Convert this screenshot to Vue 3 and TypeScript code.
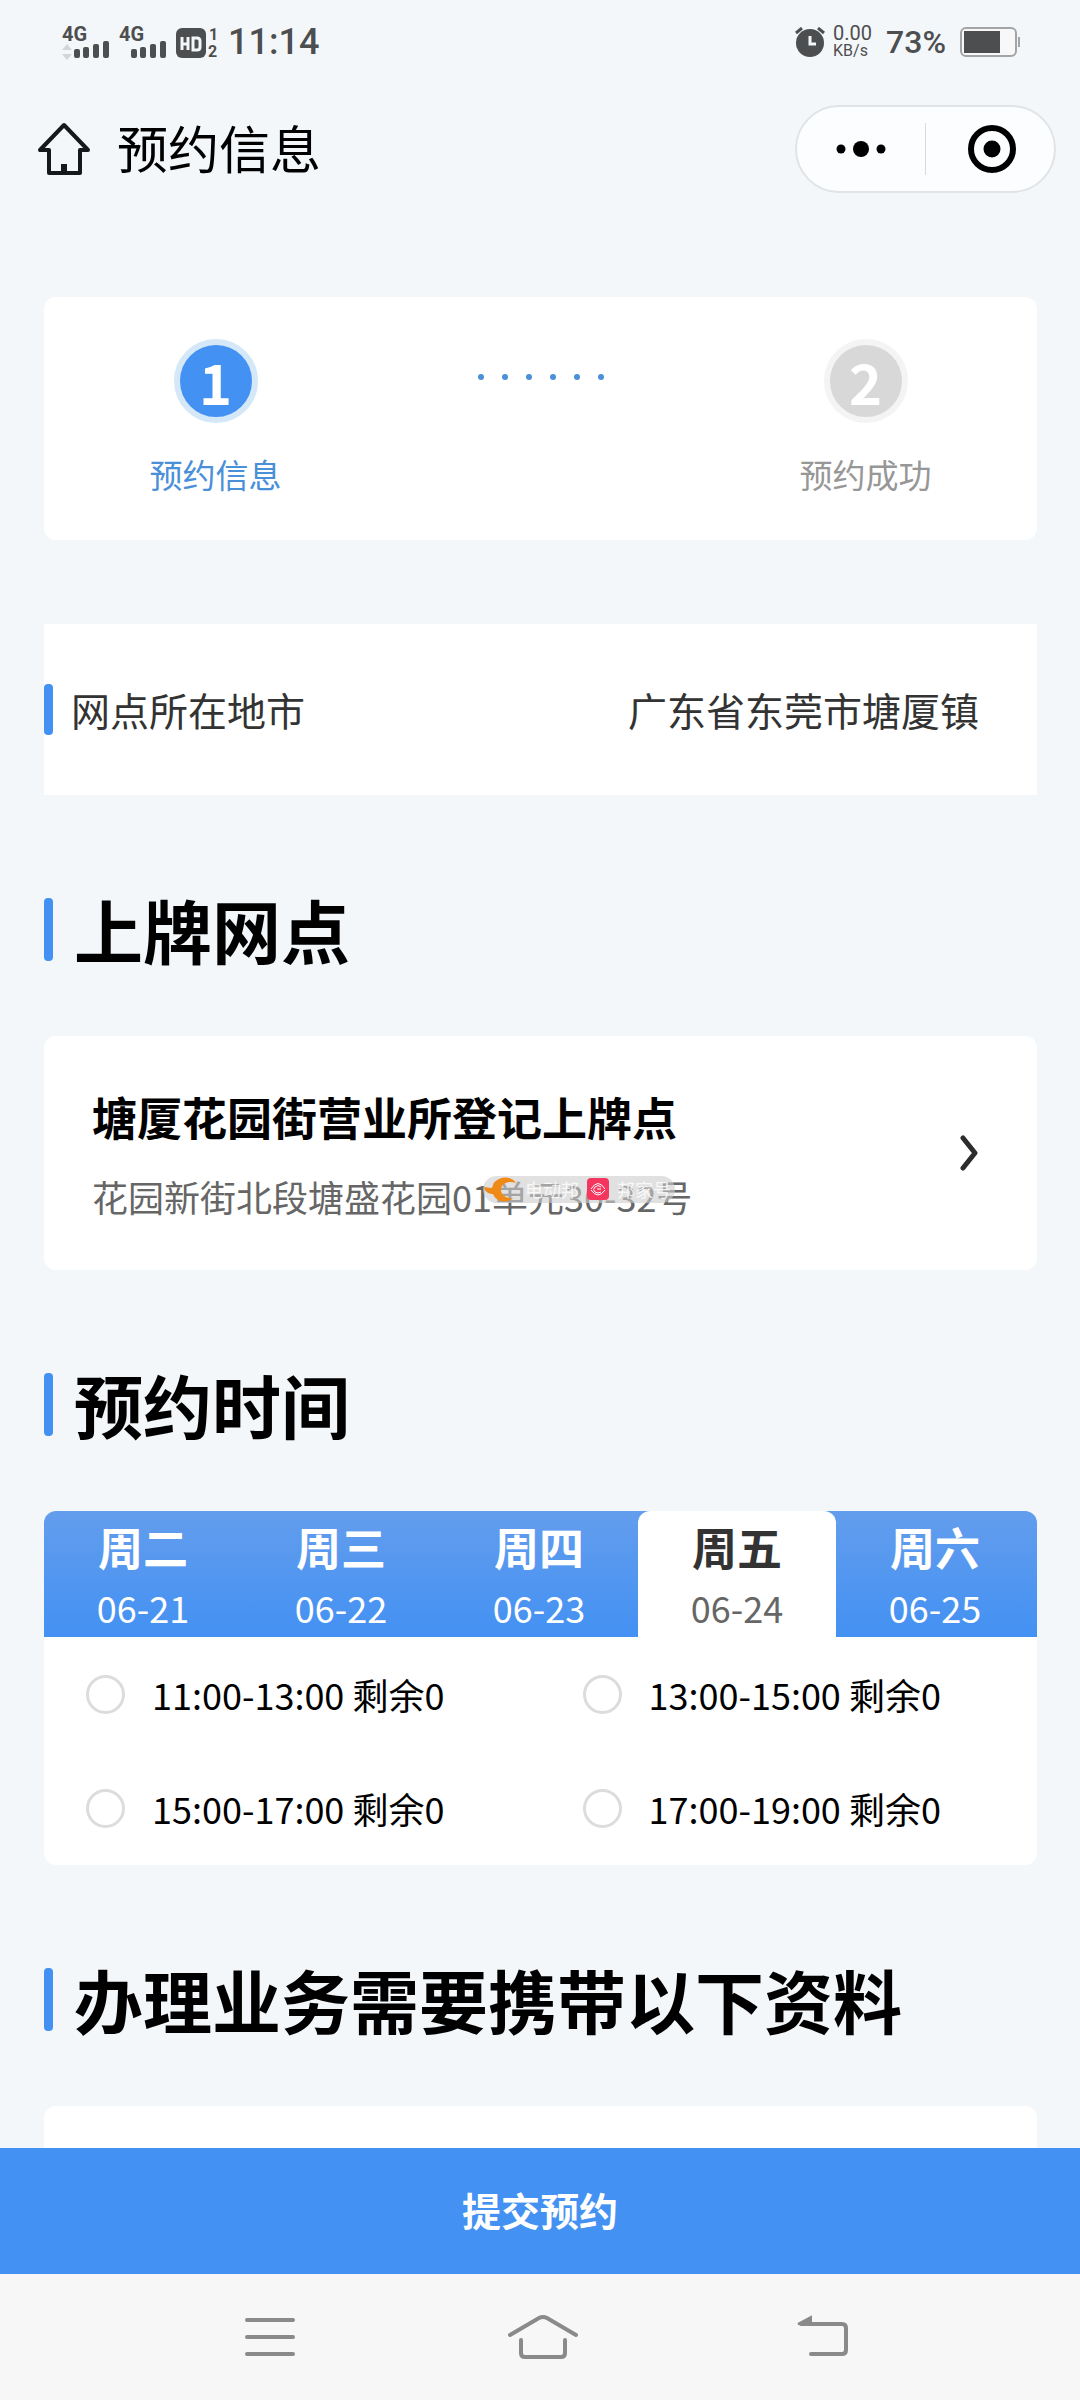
<script setup lang="ts">
import { ref } from 'vue'

interface Day {
  name: string
  date: string
}

const days: Day[] = [
  { name: '周二', date: '06-21' },
  { name: '周三', date: '06-22' },
  { name: '周四', date: '06-23' },
  { name: '周五', date: '06-24' },
  { name: '周六', date: '06-25' },
]
const slots: string[] = ['11:00-13:00', '13:00-15:00', '15:00-17:00', '17:00-19:00']

const activeDay = ref('06-24')
const chosenSlot = ref('')
</script>

<template>
  <div class="screen">
    <div class="status">
      <div class="status-side">
        <svg class="signal" width="57" height="44" viewBox="0 -4 57 44" aria-hidden="true">
          <text x="0" y="17" class="net">4G</text>
          <path d="M5 20l5 6H0zM5 36l5-6H0z" fill="#d3d5d7" />
          <rect x="12" y="25" width="6" height="9" rx="2" />
          <rect x="21" y="23" width="6" height="11" rx="2" />
          <rect x="31" y="20" width="6" height="14" rx="2" />
          <rect x="41" y="17" width="6" height="17" rx="2" />
        </svg>
        <svg class="signal" width="57" height="44" viewBox="0 -4 57 44" aria-hidden="true">
          <text x="0" y="17" class="net">4G</text>
          <rect x="12" y="25" width="6" height="9" rx="2" />
          <rect x="21" y="23" width="6" height="11" rx="2" />
          <rect x="31" y="20" width="6" height="14" rx="2" />
          <rect x="41" y="17" width="6" height="17" rx="2" />
        </svg>
        <svg class="signal" width="44" height="44" viewBox="0 -4 44 44" aria-hidden="true">
          <rect x="0" y="4" width="30" height="30" rx="6" />
          <path d="M6 13v13M12 13v13M6 20h6M17 14h4q3 0 3 3v6q0 3-3 3h-4z" fill="none" stroke="#f3f7fa" stroke-width="3" />
          <text x="33" y="16" class="sim">1</text>
          <text x="32" y="33" class="sim">2</text>
        </svg>
        <span class="clock">11:14</span>
      </div>
      <div class="status-side">
        <svg width="30" height="30" viewBox="0 0 30 30" aria-hidden="true">
          <circle cx="15" cy="16" r="14" fill="#4d4e50" />
          <path d="M1 6l6-5M29 6l-6-5" stroke="#4d4e50" stroke-width="3" />
          <path d="M15 9v8h6" fill="none" stroke="#f3f7fa" stroke-width="3" />
        </svg>
        <span class="speed"><span>0.00</span><small>KB/s</small></span>
        <span class="percent">73%</span>
        <svg width="60" height="30" viewBox="0 0 60 30" aria-hidden="true">
          <rect x="1" y="1" width="55" height="28" rx="5" fill="#f8f8f9" stroke="#a2a4a6" stroke-width="2" />
          <rect x="4" y="4" width="36" height="22" fill="#4d4e50" />
          <rect x="58" y="10" width="2" height="10" fill="#a2a4a6" />
        </svg>
      </div>
    </div>

    <header class="nav">
      <button class="plain" type="button" aria-label="首页">
        <svg width="54" height="54" viewBox="0 0 54 54" fill="none" stroke="#16181a" stroke-width="4" stroke-linejoin="round" aria-hidden="true">
          <path d="M27 3L3 28H12V51H43V28H51Z" />
          <path d="M27 42v9" stroke-width="6" />
        </svg>
      </button>
      <h1>预约信息</h1>
      <div class="capsule">
        <button class="plain" type="button" aria-label="更多">
          <svg width="50" height="18" viewBox="0 0 50 18" aria-hidden="true">
            <circle cx="5" cy="9" r="4.500" /><circle cx="25" cy="9" r="8" /><circle cx="45" cy="9" r="4.500" />
          </svg>
        </button>
        <i></i>
        <button class="plain" type="button" aria-label="关闭">
          <svg width="52" height="48" viewBox="-4 0 52 48" aria-hidden="true">
            <circle cx="24" cy="24" r="21" fill="none" stroke="#000" stroke-width="6" /><circle cx="24" cy="24" r="8.500" />
          </svg>
        </button>
      </div>
    </header>

    <main class="content">
      <ol class="card steps">
        <li class="step current"><b>1</b><span>预约信息</span></li>
        <li class="dots" aria-hidden="true"><i v-for="n in 6" :key="n"></i></li>
        <li class="step"><b>2</b><span>预约成功</span></li>
      </ol>

      <div class="city">
        <span class="city-label">网点所在地市</span>
        <span>广东省东莞市塘厦镇</span>
      </div>

      <h2>上牌网点</h2>
      <button class="card site" type="button">
        <span class="site-text">
          <strong>塘厦花园街营业所登记上牌点</strong>
          <span class="address">
            花园新街北段塘盛花园01单元30-32号
            <span class="mark">
              <svg width="34" height="26" viewBox="0 0 34 26" aria-hidden="true">
                <path d="M33 7C29 0 18 0 13 5C9 7 11 11 8 12L1 11C2 17 7 18 10 18C13 26 24 28 30 22C24 23 18 19 18 14C18 8 25 4 33 7Z" fill="#f08a16" />
              </svg>
              <span>电动邦</span>
              <svg width="22" height="22" viewBox="0 0 22 22" fill="none" stroke="#fff" aria-hidden="true">
                <rect width="22" height="22" rx="4" fill="#f5365f" stroke="none" />
                <path d="M4 11q7-11 14 0M18 12q-7 10-14 0M14 9q-3-3-6 0t0 5q3 2 6 0M14 11h-4" />
              </svg>
              <span>邦家号</span>
            </span>
          </span>
        </span>
        <svg width="18" height="36" viewBox="0 0 18 36" fill="none" stroke="#2c2c2e" stroke-width="5" stroke-linecap="round" stroke-linejoin="round" aria-hidden="true">
          <path d="M3 3l12 15L3 33" />
        </svg>
      </button>

      <h2>预约时间</h2>
      <section class="card">
        <div class="days">
          <button
            v-for="day in days"
            :key="day.date"
            type="button"
            class="day"
            :class="{ active: day.date === activeDay }"
            @click="activeDay = day.date"
          >
            <b>{{ day.name }}</b>
            <span>{{ day.date }}</span>
          </button>
        </div>
        <div class="slots">
          <label v-for="slot in slots" :key="slot" class="slot">
            <input v-model="chosenSlot" type="radio" name="slot" :value="slot" />
            <span>{{ slot }} 剩余0</span>
          </label>
        </div>
      </section>

      <h2>办理业务需要携带以下资料</h2>
      <section class="card papers"></section>
    </main>

    <button class="submit" type="button">提交预约</button>

    <nav class="keys">
      <button class="plain" type="button" aria-label="最近任务">
        <svg width="50" height="42" viewBox="0 0 50 42" aria-hidden="true">
          <path d="M2 4h46M2 21h46M2 38h46" />
        </svg>
      </button>
      <button class="plain" type="button" aria-label="主屏幕">
        <svg width="72" height="46" viewBox="0 0 72 46" aria-hidden="true">
          <path d="M3 21L32 4q4-2 8 0L69 21M14 26v13q0 4 4 4h36q4 0 4-4V26" />
        </svg>
      </button>
      <button class="plain" type="button" aria-label="返回">
        <svg width="66" height="44" viewBox="-14 0 66 44" aria-hidden="true">
          <path d="M4 9H45q4 0 4 4V35q0 4-4 4H14" />
          <path d="M1 9L14 2V9Z" fill="#8a8a8a" stroke-width="2" />
        </svg>
      </button>
    </nav>
  </div>
</template>

<style>
body {
  margin: 0;
}
</style>

<style scoped>
.screen {
  display: flex;
  flex-direction: column;
  height: 100vh;
  background: #f3f7fa;
  color: #000;
  font-family: "Noto Sans CJK SC", sans-serif;
}
button {
  margin: 0;
  border: 0;
  font-family: inherit;
  cursor: pointer;
}
.plain {
  display: flex;
  align-items: center;
  justify-content: center;
  padding: 0;
  background: none;
}
svg {
  display: block;
  flex: none;
}

.status {
  display: flex;
  flex: none;
  justify-content: space-between;
  align-items: center;
  height: 84px;
  padding: 0 60px 0 62px;
  color: #4d4e50;
  font-family: Roboto, sans-serif;
}
.status-side {
  display: flex;
  align-items: center;
}
.signal {
  fill: #4d4e50;
}
.net {
  font-size: 20px;
  font-weight: 700;
}
.sim {
  font-size: 16px;
  font-weight: 700;
}
.clock {
  margin-left: 8px;
  font-size: 36px;
  line-height: 36px;
  font-weight: 500;
}
.speed {
  display: flex;
  flex-direction: column;
  margin: 0 14px 0 8px;
  font-size: 20px;
  line-height: 18px;
}
.speed small {
  font-size: 16px;
  line-height: 18px;
}
.percent {
  margin-right: 14px;
  font-size: 32px;
  line-height: 36px;
  font-weight: 500;
}

.nav {
  display: flex;
  flex: none;
  align-items: center;
  height: 130px;
  padding: 0 24px 0 37px;
}
.nav h1 {
  flex: 1;
  margin: 0 0 0 26px;
  padding-bottom: 4px;
  font-size: 51px;
  line-height: 72px;
  font-weight: 400;
}
.capsule {
  display: flex;
  align-items: center;
  box-sizing: border-box;
  width: 261px;
  height: 88px;
  border: 2px solid #e1e4e6;
  border-radius: 44px;
  background: #fcfdfe;
}
.capsule button {
  flex: 1;
  height: 100%;
}
.capsule i {
  width: 1px;
  height: 52px;
  background: #d8dadc;
}

.content {
  flex: 1;
  min-height: 0;
  padding: 83px 43px 0 44px;
  overflow-y: auto;
  scrollbar-width: none;
}
.card {
  border-radius: 12px;
  background: #fff;
}
.steps {
  display: flex;
  box-sizing: border-box;
  height: 243px;
  margin: 0 0 84px;
  padding: 42px 9px 0;
  list-style: none;
}
.step {
  display: flex;
  flex: 1;
  flex-direction: column;
  align-items: center;
  gap: 27px;
  color: #979797;
  font-size: 33px;
  line-height: 48px;
}
.step b {
  width: 72px;
  border: 6px solid #f4f4f4;
  border-radius: 50%;
  background: #d8d8d8;
  color: #fff;
  font-size: 56px;
  line-height: 72px;
  text-align: center;
}
.current {
  color: #4a90d9;
}
.current b {
  border-color: #d5e8f8;
  background: #4391f3;
}
.dots {
  display: flex;
  flex: 1;
  justify-content: center;
  gap: 18px;
  padding-top: 35px;
}
.dots i {
  width: 6px;
  height: 6px;
  border-radius: 50%;
  background: #4a90d9;
}

.city {
  display: flex;
  justify-content: space-between;
  align-items: center;
  height: 171px;
  padding-right: 58px;
  background: #fff;
  color: #333;
  font-size: 39px;
  line-height: 51px;
}
.city-label {
  display: flex;
  align-items: center;
  gap: 18px;
}
.city-label::before {
  width: 9px;
  height: 51px;
  border-radius: 4px;
  background: #4391f3;
  content: "";
}

h2 {
  display: flex;
  align-items: center;
  gap: 21px;
  height: 63px;
  margin: 103px 0 75px;
  font-size: 69px;
  line-height: 63px;
  font-weight: 700;
}
h2::before {
  width: 9px;
  height: 63px;
  border-radius: 4px;
  background: #4391f3;
  content: "";
}

.site {
  display: flex;
  justify-content: space-between;
  align-items: center;
  width: 100%;
  min-height: 234px;
  padding: 0 59px 0 48px;
  color: #000;
  text-align: left;
}
.site-text {
  display: flex;
  flex-direction: column;
  gap: 16px;
  padding-top: 3px;
}
.site strong {
  font-size: 45px;
  line-height: 66px;
}
.address {
  position: relative;
  color: #666;
  font-size: 36px;
  line-height: 60px;
}
.mark {
  position: absolute;
  top: 10px;
  left: 391px;
  display: flex;
  align-items: center;
  gap: 8px;
  width: 192px;
  height: 27px;
  border-radius: 14px;
  background: rgb(205 205 205 / 60%);
  color: rgb(255 255 255 / 80%);
  font-size: 18px;
  line-height: 26px;
  white-space: nowrap;
}

.days {
  display: flex;
  padding-right: 3px;
  overflow: hidden;
  border-radius: 12px 12px 0 0;
  background: linear-gradient(#639ded, #4391f3);
}
.day {
  display: flex;
  flex: 1;
  flex-direction: column;
  align-items: center;
  height: 126px;
  padding: 6px 0 0;
  background: none;
  color: #fff;
  font-size: 36px;
  line-height: 60px;
}
.day b {
  font-size: 45px;
}
.day.active {
  border-radius: 12px 12px 0 0;
  background: #fff;
  color: #666;
}
.active b {
  color: #333;
}
.slots {
  display: grid;
  grid-template-columns: 1fr 1fr;
}
.slot {
  display: flex;
  align-items: center;
  gap: 27px;
  height: 114px;
  padding-left: 42px;
  font-size: 36px;
  line-height: 54px;
}
.slot input {
  box-sizing: border-box;
  width: 39px;
  height: 39px;
  margin: 0;
  border: 3px solid #dcdcdc;
  border-radius: 50%;
  background: #fff;
  appearance: none;
}
.slot input:checked {
  border: 12px solid #4391f3;
}
.papers {
  min-height: 240px;
}

.submit {
  flex: none;
  height: 126px;
  padding: 0 0 4px;
  background: #4391f3;
  color: #fff;
  font-size: 39px;
  line-height: 60px;
  font-weight: 700;
}
.keys {
  display: flex;
  flex: none;
  align-items: center;
  height: 126px;
  padding: 0 127px 0 133px;
  background: #f7f7f7;
}
.keys button {
  flex: 1;
  height: 80px;
}
.keys svg {
  fill: none;
  stroke: #8a8a8a;
  stroke-width: 4;
  stroke-linecap: round;
}
</style>
